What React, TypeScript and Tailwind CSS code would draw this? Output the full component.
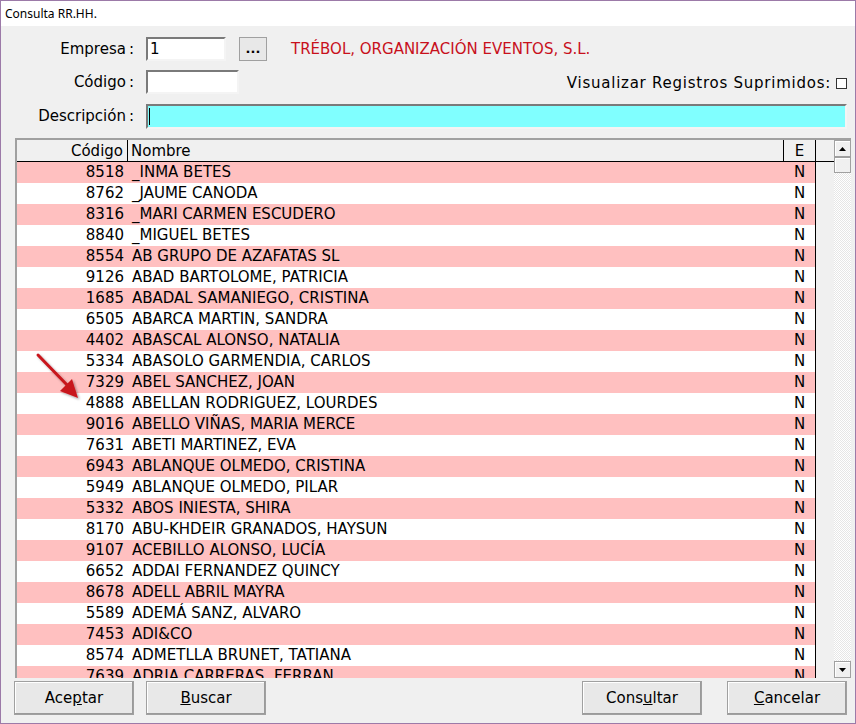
const rows: [string, string][] = [
  ["8518", "_INMA BETES"],
  ["8762", "_JAUME CANODA"],
  ["8316", "_MARI CARMEN ESCUDERO"],
  ["8840", "_MIGUEL BETES"],
  ["8554", "AB GRUPO DE AZAFATAS SL"],
  ["9126", "ABAD BARTOLOME, PATRICIA"],
  ["1685", "ABADAL SAMANIEGO, CRISTINA"],
  ["6505", "ABARCA MARTIN, SANDRA"],
  ["4402", "ABASCAL ALONSO, NATALIA"],
  ["5334", "ABASOLO GARMENDIA, CARLOS"],
  ["7329", "ABEL SANCHEZ, JOAN"],
  ["4888", "ABELLAN RODRIGUEZ, LOURDES"],
  ["9016", "ABELLO VIÑAS, MARIA MERCE"],
  ["7631", "ABETI MARTINEZ, EVA"],
  ["6943", "ABLANQUE OLMEDO, CRISTINA"],
  ["5949", "ABLANQUE OLMEDO, PILAR"],
  ["5332", "ABOS INIESTA, SHIRA"],
  ["8170", "ABU-KHDEIR GRANADOS, HAYSUN"],
  ["9107", "ACEBILLO ALONSO, LUCÍA"],
  ["6652", "ADDAI FERNANDEZ QUINCY"],
  ["8678", "ADELL ABRIL MAYRA"],
  ["5589", "ADEMÁ SANZ, ALVARO"],
  ["7453", "ADI&CO"],
  ["8574", "ADMETLLA BRUNET, TATIANA"],
  ["7639", "ADRIA CARRERAS, FERRAN"],
];

function Label({ text }: { text: string }) {
  return (
    <div className="w-[133px] text-right pr-0 shrink-0">
      {text}
      <span className="ml-[3px]">:</span>
    </div>
  );
}

const sunken =
  "bg-white border-2 border-t-[#7a7a7a] border-l-[#7a7a7a] border-b-[#f4f4f4] border-r-[#f4f4f4]";

function Btn({ children, className }: { children: React.ReactNode; className?: string }) {
  return (
    <button
      className={
        "h-[34px] w-[120px] bg-[#e8e8e8] border border-[#a0a0a0] shadow-[inset_-1px_-1px_0_#9a9a9a,inset_1px_1px_0_#ffffff] text-[15px] " +
        (className ?? "")
      }
    >
      {children}
    </button>
  );
}

export default function App() {
  return (
    <div
      className="relative w-[856px] h-[724px] flex flex-col bg-[#f0f0f0] border border-[#9c7aa8] text-[15px] text-black overflow-hidden"
      style={{ fontFamily: '"DejaVu Sans", Verdana, sans-serif' }}
    >
      {/* title bar */}
      <div
        className="h-[25px] bg-white flex items-center pl-[4px] text-[12px] shrink-0"
        style={{ fontFamily: '"Noto Sans", "Liberation Sans", sans-serif' }}
      >
        Consulta RR.HH.
      </div>

      {/* form */}
      <div className="flex flex-col pt-[11px] pr-[8px]">
        <div className="flex items-center h-[24px]">
          <Label text="Empresa" />
          <div className={"ml-[12px] w-[80px] h-[24px] flex items-center pl-[2px] " + sunken}>1</div>
          <div className="ml-[13px] w-[28px] h-[24px] bg-[#e8e8e8] border border-[#a0a0a0] flex items-center justify-center text-[13px] font-bold leading-none pb-[2px]">
            ...
          </div>
          <div className="ml-[24px] text-[#c8101c]">TRÉBOL, ORGANIZACIÓN EVENTOS, S.L.</div>
        </div>

        <div className="flex items-center h-[24px] mt-[9px]">
          <Label text="Código" />
          <div className={"ml-[12px] w-[93px] h-[24px] " + sunken} />
          <div className="ml-auto flex items-center pt-[3px]">
            <span className="tracking-[0.75px]">Visualizar Registros Suprimidos:</span>
            <span className="ml-[5px] w-[11px] h-[11px] bg-white border border-[#333]" />
          </div>
        </div>

        <div className="flex items-center h-[25px] mt-[10px]">
          <Label text="Descripción" />
          <div className="ml-[12px] flex-1 h-[25px] bg-[#80ffff] border-2 border-t-[#7a7a7a] border-l-[#7a7a7a] border-b-[#f4f4f4] border-r-[#f4f4f4] flex items-center pl-[1px]">
            <span className="w-px h-[17px] bg-black" />
          </div>
        </div>
      </div>

      {/* list */}
      <div className="ml-[14px] mr-[4px] mt-[9px] h-[540px] flex border-t-2 border-l-2 border-t-[#a0a0a0] border-l-[#a0a0a0] overflow-hidden">
        <div className="flex-1 flex flex-col">
          <div className="h-[22px] flex bg-[#f0f0f0] border-b border-black shrink-0">
            <div className="w-[111px] text-right pr-[4px] border-r border-black">Código</div>
            <div className="flex-1 pl-[3px] border-r border-black">Nombre</div>
            <div className="w-[32px] text-center border-r border-black">E</div>
            <div className="w-[18px]" />
          </div>
          {rows.map(([code, name], i) => (
            <div key={code} className="h-[21px] flex shrink-0 leading-[21px]">
              <div className={"flex flex-1 " + (i % 2 === 0 ? "bg-[#ffc0c0]" : "bg-white")}>
                <div className="w-[111px] text-right pr-[4px]">{code}</div>
                <div className="flex-1 pl-[4px] whitespace-nowrap">{name}</div>
                <div className="w-[32px] text-center border-r border-black">N</div>
              </div>
              <div className="w-[18px] bg-[#f0f0f0]" />
            </div>
          ))}
        </div>

        {/* scrollbar */}
        <div className="w-[17px] flex flex-col bg-[repeating-conic-gradient(#ffffff_0_25%,#e6e6e6_0_50%)] bg-[length:2px_2px]">
          <div className="h-[17px] bg-[#f0f0f0] border border-[#a0a0a0] shadow-[inset_1px_1px_0_#fff] flex items-center justify-center">
            <svg width="7" height="4" viewBox="0 0 7 4">
              <path d="M3.5 0 L7 4 L0 4 Z" fill="#000" />
            </svg>
          </div>
          <div className="h-[16px] bg-[#f0f0f0] border border-[#a0a0a0] shadow-[inset_1px_1px_0_#fff]" />
          <div className="flex-1" />
          <div className="h-[17px] bg-[#f0f0f0] border border-[#a0a0a0] shadow-[inset_1px_1px_0_#fff] flex items-center justify-center">
            <svg width="7" height="4" viewBox="0 0 7 4">
              <path d="M0 0 L7 0 L3.5 4 Z" fill="#000" />
            </svg>
          </div>
        </div>
      </div>

      {/* buttons */}
      <div className="flex mt-[3px] pl-[13px] pr-[8px]">
        <Btn>
          Ace<u>p</u>tar
        </Btn>
        <Btn className="ml-[12px]">
          <u>B</u>uscar
        </Btn>
        <Btn className="ml-auto">
          Cons<u>u</u>ltar
        </Btn>
        <Btn className="ml-[25px]">
          <u>C</u>ancelar
        </Btn>
      </div>

      {/* red arrow annotation */}
      <svg className="absolute left-[30px] top-[347px]" width="58" height="58" viewBox="0 0 58 58">
        <defs>
          <filter id="sh" x="-20%" y="-20%" width="150%" height="150%">
            <feDropShadow dx="1.5" dy="1.5" stdDeviation="1.2" floodColor="#000" floodOpacity="0.35" />
          </filter>
        </defs>
        <g filter="url(#sh)">
          <line x1="7" y1="7" x2="38" y2="39" stroke="#c8141c" strokeWidth="3" strokeLinecap="round" />
          <path d="M47 50 L29 43 L41 31 Z" fill="#c8141c" />
        </g>
      </svg>
    </div>
  );
}
